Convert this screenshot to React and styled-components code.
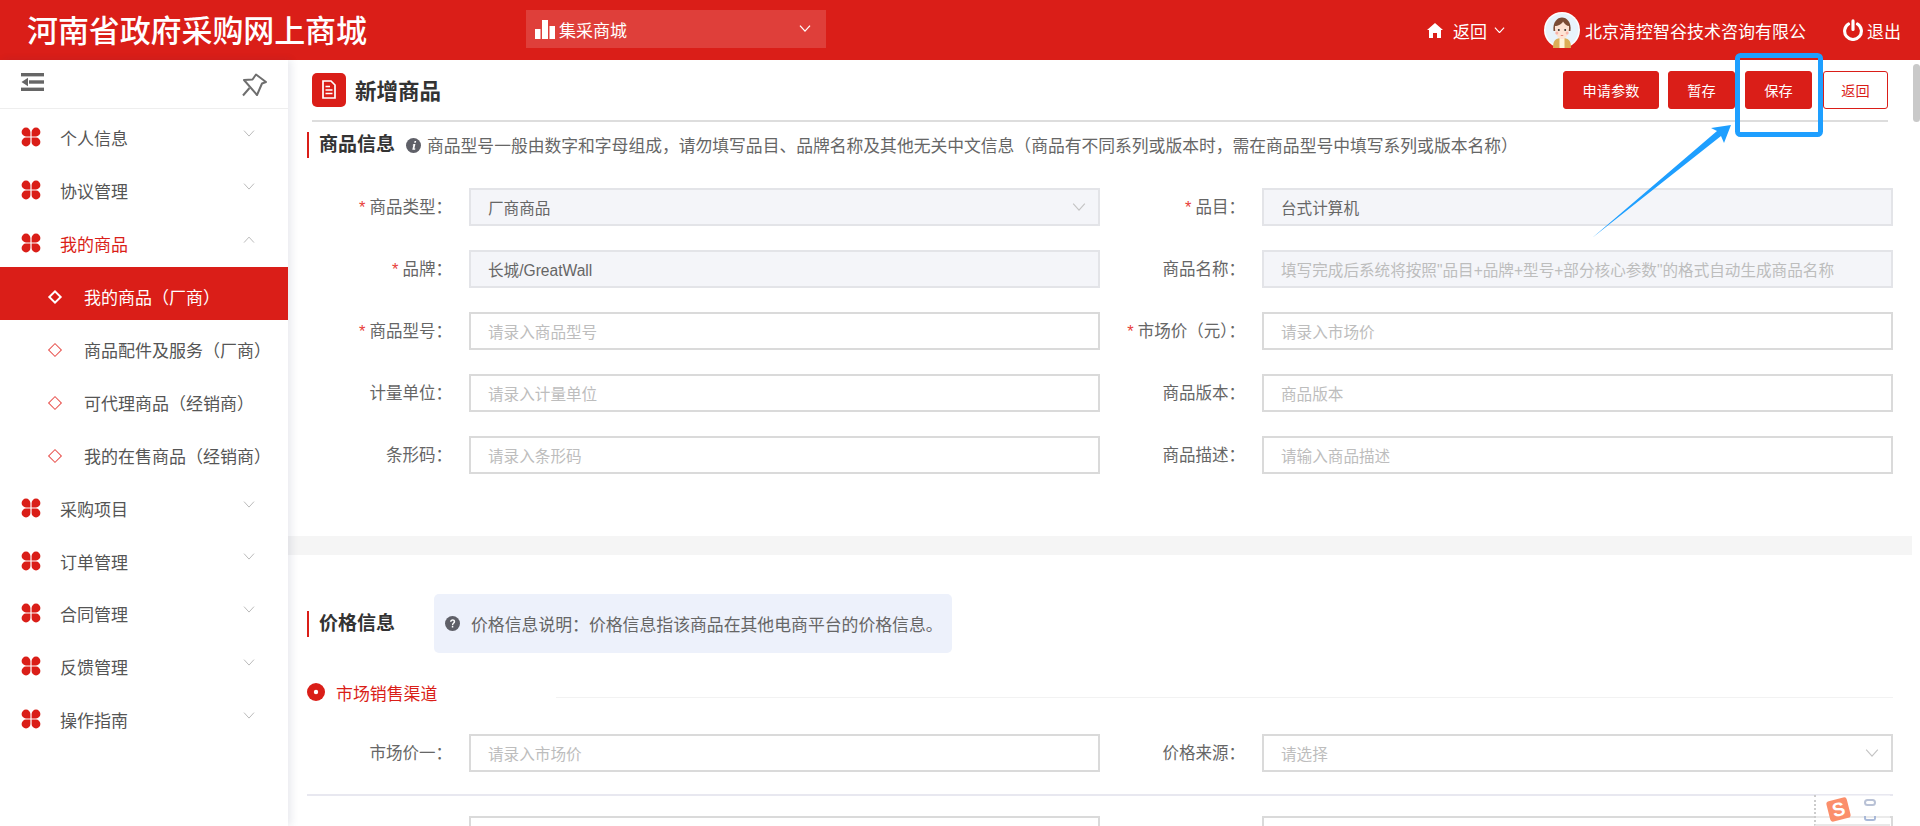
import styled, { createGlobalStyle } from 'styled-components';

const RED = '#da1e18';

const GlobalStyle = createGlobalStyle`
    html, body {
        margin: 0;
        padding: 0;
        width: 1920px;
        height: 826px;
        overflow: hidden;
        background: #fff;
        font-family: "Liberation Sans", "Noto Sans CJK SC", sans-serif;
        color: #606266;
    }
    * { box-sizing: border-box; }
`;

const Page = styled.div`
    position: relative;
    width: 1920px;
    height: 826px;
    overflow: hidden;
    display: flex;
    flex-direction: column;
`;

/* header */
const Header = styled.header`
    flex: 0 0 60px;
    background: ${RED};
    color: #fff;
    display: flex;
    align-items: center;
    padding: 0 19px 0 27px;
`;
const Brand = styled.div`
    width: 499px;
    font-family: "Liberation Serif", "Noto Sans CJK SC", serif;
    font-size: 31px;
    font-weight: 500;
    line-height: 40px;
    letter-spacing: -0.1px;
    white-space: nowrap;
    margin-top: 3px;
`;
const MallSelect = styled.div`
    width: 300px;
    height: 38px;
    margin-top: -2px;
    padding: 0 15px 0 9px;
    background: rgba(255, 255, 255, 0.15);
    display: flex;
    align-items: center;
    font-size: 17px;
    gap: 4px;
    span { flex: 1; }
`;
const HeaderRight = styled.div`
    margin-left: auto;
    display: flex;
    align-items: center;
    font-size: 17px;
    white-space: nowrap;
`;
const HomeLink = styled.div`
    display: flex;
    align-items: center;
    gap: 10px;
    margin-right: 39px;
    svg:last-child { margin-left: -3px; }
`;
const Avatar = styled.svg`
    width: 36px;
    height: 36px;
    margin-right: 5px;
    flex: none;
`;
const Logout = styled.div`
    display: flex;
    align-items: center;
    gap: 3px;
    margin-left: 36px;
`;

/* body */
const Body = styled.div`
    flex: 1;
    min-height: 0;
    display: flex;
`;
const Sidebar = styled.aside`
    flex: 0 0 288px;
    background: #fff;
    box-shadow: 3px 0 8px rgba(30, 40, 90, 0.1);
    z-index: 2;
`;
const SideTools = styled.div`
    height: 49px;
    padding: 13px 21px 0 21px;
    border-bottom: 1px solid #eee;
    display: flex;
    justify-content: space-between;
    align-items: flex-start;
    color: #666;
    margin-bottom: 3px;
`;
const MenuRow = styled.div`
    height: 52.8px;
    display: flex;
    align-items: center;
    padding: 0 33px 0 21px;
    font-size: 17px;
    color: ${({ $open }) => ($open ? RED : '#555')};
    span { flex: 1; margin: -1px 0 0 19px; }
    svg.caret { margin-top: -9px; }
`;
const SubList = styled.div`
    margin: -3px 0 3px;
`;
const SubRow = styled.div`
    height: 53px;
    padding: 6px 0 0 50px;
    display: flex;
    align-items: center;
    font-size: 17px;
    background: ${({ $active }) => ($active ? RED : 'transparent')};
    color: ${({ $active }) => ($active ? '#fff' : '#555')};
    white-space: nowrap;
    span { margin-left: 24px; }
`;
const Diamond = styled.i`
    display: block;
    width: 10px;
    height: 10px;
    transform: rotate(45deg);
    border-style: solid;
    border-color: ${({ $active }) => ($active ? '#fff' : '#e8504c')};
    border-width: ${({ $active }) => ($active ? '2px' : '1.5px')};
`;

/* main */
const Main = styled.main`
    flex: 1;
    min-width: 0;
    overflow: hidden;
`;
const TitleBar = styled.div`
    height: 62px;
    margin: 0 32px 0 24px;
    border-bottom: 2px solid #ddd;
    display: flex;
    align-items: center;
    padding-bottom: 1px;
`;
const TitleIcon = styled.div`
    width: 34px;
    height: 34px;
    background: ${RED};
    border-radius: 5px;
    display: flex;
    align-items: center;
    justify-content: center;
`;
const PageTitle = styled.h1`
    margin: 0 0 0 9px;
    font-size: 21.5px;
    font-weight: 700;
    color: #333;
    flex: 1;
`;
const ActionButton = styled.button`
    height: 38px;
    width: ${({ $w }) => $w}px;
    margin-left: ${({ $gap }) => $gap}px;
    padding: 0;
    border-radius: 3px;
    border: 1px solid ${RED};
    background: ${({ $plain }) => ($plain ? '#fff' : RED)};
    color: ${({ $plain }) => ($plain ? RED : '#fff')};
    font-family: inherit;
    font-size: 14.2px;
`;
const SectionHead = styled.div`
    display: flex;
    align-items: center;
    margin: ${({ $top }) => $top}px 0 0 19px;
`;
const SectionName = styled.h2`
    margin: 0;
    height: 26px;
    line-height: 26px;
    border-left: 2px solid ${RED};
    padding-left: 10px;
    font-size: 19px;
    font-weight: 700;
    color: #333;
    white-space: nowrap;
`;
const Note = styled.div`
    display: flex;
    align-items: center;
    gap: 6px;
    margin-left: 11px;
    font-size: 16.8px;
    color: #666;
    white-space: nowrap;
`;
const Alert = styled.div`
    margin-left: 39px;
    height: 59px;
    width: 518px;
    padding-left: 11px;
    background: #edf1fb;
    border-radius: 5px;
    display: flex;
    align-items: center;
    gap: 11px;
    font-size: 16.85px;
    color: #666;
    white-space: nowrap;
`;
const FormGrid = styled.div`
    display: grid;
    grid-template-columns: 162px 631px 162px 631px;
    row-gap: 24px;
    margin: ${({ $top }) => $top}px 0 0 19px;
`;
const Label = styled.label`
    height: 38px;
    line-height: 38px;
    text-align: right;
    padding-right: 17px;
    font-size: 16.5px;
    color: #666;
    white-space: nowrap;
    em { color: #e8403a; font-style: normal; margin-right: 4px; }
`;
const Field = styled.div`
    height: 38px;
    display: flex;
    align-items: center;
    justify-content: space-between;
    padding: 0 12px 0 17px;
    border: 2px solid ${({ $filled }) => ($filled ? '#e3e4e8' : '#dadada')};
    background: ${({ $filled }) => ($filled ? '#f4f5f9' : '#fff')};
    font-size: 15.6px;
    color: ${({ $hint }) => ($hint ? '#bdbdbd' : '#666')};
    white-space: nowrap;
`;
const Band = styled.div`
    height: 19px;
    margin: 62px 8px 0 0;
    background: #f5f5f5;
`;
const ChannelRow = styled.div`
    margin: 27px 27px 0 19px;
    height: 24px;
    display: flex;
    align-items: center;
    gap: 11px;
    color: ${RED};
    font-size: 16.9px;
`;
const ChannelLine = styled.div`
    flex: 1;
    height: 1px;
    margin: 10px 0 0 108px;
    background: #f2f2f2;
`;
const Divider = styled.div`
    height: 2px;
    margin: 22px 27px 20px 19px;
    background: #e8e8f0;
`;

/* things laid over the page */
const ScrollThumb = styled.div`
    position: absolute;
    top: 64px;
    right: 0;
    width: 7px;
    height: 58px;
    border-radius: 4px;
    background: #c9c9c9;
`;
const Annotation = styled.svg`
    position: absolute;
    top: 0;
    left: 0;
    z-index: 5;
    pointer-events: none;
`;
const ImeBar = styled.div`
    position: absolute;
    left: 1814px;
    top: 795px;
    width: 76px;
    height: 31px;
    z-index: 4;
    overflow: hidden;
    background: rgba(255, 255, 255, 0.45);
    border-left: 2px dotted #ccc;
    border-bottom: 2px solid #e8e8e8;
    display: flex;
    align-items: flex-start;
    padding: 4px 0 0 12px;
    gap: 15px;
`;
const ImeLogo = styled.div`
    width: 21px;
    height: 21px;
    background: #fb8f6b;
    border-radius: 3px;
    transform: rotate(-14deg);
    color: #fff;
    font: 700 19px/21px "Liberation Sans", sans-serif;
    text-align: center;
`;
const ImeGlyphs = styled.div`
    display: flex;
    flex-direction: column;
    gap: 10px;
    i {
        display: block;
        width: 12px;
        height: 7px;
        border: 2px solid #b9c2d6;
        border-radius: 4px;
    }
    i + i {
        height: 5px;
        border-color: #a9b9d8;
        border-top: 0;
        border-radius: 0 0 3px 3px;
    }
`;

const Caret = ({ up, color = '#bbb', size = 12, stroke = 1, className }) => (
    <svg className={className} width={size} height={size * 0.6} viewBox="0 0 12 7" fill="none">
        <path d={up ? 'M1 6.5 L6 1 L11 6.5' : 'M1 .5 L6 6 L11 .5'} stroke={color} strokeWidth={stroke} />
    </svg>
);

const Flower = () => (
    <svg width="20" height="20" viewBox="0 0 20 20" fill={RED} style={{ flex: 'none', marginTop: -2 }}>
        <path d="M9.4 9.4 H5 A4.4 4.4 0 1 1 9.4 5 Z" />
        <path d="M10.6 9.4 H15 A4.4 4.4 0 1 0 10.6 5 Z" />
        <path d="M9.4 10.6 H5 A4.4 4.4 0 1 0 9.4 15 Z" />
        <path d="M10.6 10.6 H15 A4.4 4.4 0 1 1 10.6 15 Z" />
    </svg>
);

const InfoDot = ({ mark }) => (
    <svg width="15" height="15" viewBox="0 0 15 15" style={{ flex: 'none' }}>
        <circle cx="7.5" cy="7.5" r="7.5" fill="#5f6068" />
        {mark === 'i' ? (
            <path d="M8.6 3 h1.6 l-.4 1.7 h-1.6 Z M7.7 6 h1.7 l-1 4.4 h1 l-.3 1.4 h-2.8 l1-4.5 h-.9 Z" fill="#fff" />
        ) : (
            <path d="M5 5.8 C5 2.4 10.2 2.4 10.2 5.6 C10.2 7.6 8.2 7.5 8.2 9.2 H6.9 C6.9 6.8 8.7 6.9 8.7 5.6 C8.7 4.3 6.5 4.4 6.5 5.8 Z M6.8 10 h1.5 v1.6 h-1.5 Z" fill="#fff" />
        )}
    </svg>
);

const menus = [
    { title: '个人信息' },
    { title: '协议管理' },
    {
        title: '我的商品',
        open: true,
        children: ['我的商品（厂商）', '商品配件及服务（厂商）', '可代理商品（经销商）', '我的在售商品（经销商）'],
    },
    { title: '采购项目' },
    { title: '订单管理' },
    { title: '合同管理' },
    { title: '反馈管理' },
    { title: '操作指南' },
];

const goodsFields = [
    { label: '商品类型：', required: true, value: '厂商商品', filled: true, select: true },
    { label: '品目：', required: true, value: '台式计算机', filled: true },
    { label: '品牌：', required: true, value: '长城/GreatWall', filled: true },
    { label: '商品名称：', value: '填写完成后系统将按照"品目+品牌+型号+部分核心参数"的格式自动生成商品名称', filled: true, hint: true },
    { label: '商品型号：', required: true, value: '请录入商品型号', hint: true },
    { label: '市场价（元）：', required: true, value: '请录入市场价', hint: true },
    { label: '计量单位：', value: '请录入计量单位', hint: true },
    { label: '商品版本：', value: '商品版本', hint: true },
    { label: '条形码：', value: '请录入条形码', hint: true },
    { label: '商品描述：', value: '请输入商品描述', hint: true },
];

const FormField = ({ label, required, value, filled, hint, select }) => (
    <>
        <Label>
            {required && <em>*</em>}
            {label}
        </Label>
        <Field $filled={filled} $hint={hint}>
            {value}
            {select && <Caret size={14} color="#c4c4c4" />}
        </Field>
    </>
);

export default function App() {
    return (
        <Page>
            <GlobalStyle />
            <Header>
                <Brand>河南省政府采购网上商城</Brand>
                <MallSelect>
                    <svg width="20" height="19" viewBox="0 0 20 19" fill="#fff">
                        <rect x="0" y="9" width="5.5" height="10" />
                        <rect x="7" y="0" width="6" height="19" />
                        <rect x="14.5" y="6" width="5.5" height="13" />
                    </svg>
                    <span>集采商城</span>
                    <Caret color="#fff" stroke={1.3} />
                </MallSelect>
                <HeaderRight>
                    <HomeLink>
                        <svg width="16" height="15" viewBox="0 0 16 15" fill="#fff">
                            <path d="M8 0 L16 7 L14 7 V15 H10 V10 H6 V15 H2 V7 H0 Z" />
                        </svg>
                        返回
                        <Caret color="#fff" size={11} stroke={1.3} />
                    </HomeLink>
                    <Avatar viewBox="0 0 36 36">
                        <circle cx="18" cy="18" r="18" fill="#fff" />
                        <circle cx="18" cy="18" r="16.6" fill="#e8f3fb" />
                        <path d="M9 36 C9 28 12 26 18 26 C24 26 27 28 27 36 Z" fill="#dcae57" />
                        <rect x="15.5" y="26" width="5" height="10" fill="#fff4dc" />
                        <path d="M9.5 19 C7.5 1 28.5 1 26.5 19 Z" fill="#7b4d36" />
                        <path d="M11 14 C14 14 18 12 19 9.5 C20.5 12 23 14 25 14 C25.5 20 23 27 18 27 C13 27 10.5 20 11 14 Z" fill="#fde3d4" />
                        <circle cx="14.8" cy="18" r="1" fill="#333" />
                        <circle cx="21.2" cy="18" r="1" fill="#333" />
                        <circle cx="12.8" cy="21" r="1.5" fill="#f8b3a8" />
                        <circle cx="23.2" cy="21" r="1.5" fill="#f8b3a8" />
                        <path d="M16.3 23 Q18 24.6 19.7 23 Z" fill="#e0483f" />
                    </Avatar>
                    北京清控智谷技术咨询有限公
                    <Logout>
                        <svg width="22" height="22" viewBox="0 0 21 21" fill="none" stroke="#fff" strokeWidth="3" strokeLinecap="round">
                            <path d="M6.2 4.8 A8 8 0 1 0 14.8 4.8" />
                            <path d="M10.5 1.8 V10" />
                        </svg>
                        退出
                    </Logout>
                </HeaderRight>
            </Header>
            <Body>
                <Sidebar>
                    <SideTools>
                        <svg width="23" height="18" viewBox="0 0 23 18" fill="#666">
                            <rect width="23" height="3.4" />
                            <rect x="8" y="7.3" width="15" height="3.4" />
                            <rect y="14.6" width="23" height="3.4" />
                            <path d="M0.5 9 L7 4.8 V13.2 Z" />
                        </svg>
                        <svg width="25" height="24" viewBox="0 0 25 24" fill="none" stroke="#6e6e6e" strokeWidth="2">
                            <path d="M2 7 L10.5 6.5 L14 1.5 L24 9 L20 10.5 L15 22 Z" strokeLinejoin="round" />
                            <path d="M7.5 15 L1 22.5" />
                        </svg>
                    </SideTools>
                    {menus.map((menu) => (
                        <div key={menu.title}>
                            <MenuRow $open={menu.open}>
                                <Flower />
                                <span>{menu.title}</span>
                                <Caret className="caret" up={menu.open} />
                            </MenuRow>
                            {menu.children && (
                                <SubList>
                                    {menu.children.map((child, index) => (
                                        <SubRow key={child} $active={index === 0}>
                                            <Diamond $active={index === 0} />
                                            <span>{child}</span>
                                        </SubRow>
                                    ))}
                                </SubList>
                            )}
                        </div>
                    ))}
                </Sidebar>
                <Main>
                    <TitleBar>
                        <TitleIcon>
                            <svg width="14" height="19" viewBox="0 0 14 19" fill="none" stroke="#fff">
                                <path d="M1 1 H9 L13 5 V18 H1 Z" strokeWidth="1.7" />
                                <path d="M3.5 6.5 H8 M3.5 10 H10.5 M3.5 13.5 H10.5" strokeWidth="1.7" />
                            </svg>
                        </TitleIcon>
                        <PageTitle>新增商品</PageTitle>
                        <ActionButton $w={96}>申请参数</ActionButton>
                        <ActionButton $w={67} $gap={9}>暂存</ActionButton>
                        <ActionButton $w={67} $gap={10}>保存</ActionButton>
                        <ActionButton $w={65} $gap={11} $plain>返回</ActionButton>
                    </TitleBar>

                    <SectionHead $top={10}>
                        <SectionName>商品信息</SectionName>
                        <Note>
                            <InfoDot mark="i" />
                            商品型号一般由数字和字母组成，请勿填写品目、品牌名称及其他无关中文信息（商品有不同系列或版本时，需在商品型号中填写系列或版本名称）
                        </Note>
                    </SectionHead>
                    <FormGrid $top={30}>
                        {goodsFields.map((field) => (
                            <FormField key={field.label} {...field} />
                        ))}
                    </FormGrid>

                    <Band />

                    <SectionHead $top={39}>
                        <SectionName>价格信息</SectionName>
                        <Alert>
                            <InfoDot mark="?" />
                            价格信息说明：价格信息指该商品在其他电商平台的价格信息。
                        </Alert>
                    </SectionHead>
                    <ChannelRow>
                        <svg width="18" height="18" viewBox="0 0 18 18">
                            <circle cx="9" cy="9" r="9" fill={RED} />
                            <circle cx="9" cy="9" r="2.2" fill="#fff" />
                        </svg>
                        市场销售渠道
                        <ChannelLine />
                    </ChannelRow>
                    <FormGrid $top={30}>
                        <FormField label="市场价一：" value="请录入市场价" hint />
                        <FormField label="价格来源：" value="请选择" hint select />
                    </FormGrid>
                    <Divider />
                    <FormGrid $top={0}>
                        <FormField label="市场价二：" value="请录入市场价" hint />
                        <FormField label="价格来源：" value="请选择" hint select />
                    </FormGrid>
                </Main>
            </Body>

            <ScrollThumb />
            <ImeBar>
                <ImeLogo>S</ImeLogo>
                <ImeGlyphs><i /><i /></ImeGlyphs>
            </ImeBar>
            <Annotation width="1920" height="826" viewBox="0 0 1920 826">
                <rect x="1737.5" y="55.5" width="83" height="79" rx="3" fill="none" stroke="#1e9fff" strokeWidth="5" />
                <path d="M1592 238 L1717 131 L1711 128 L1731 125 L1724 143 L1721 136 Z" fill="#1e9fff" />
            </Annotation>
        </Page>
    );
}
